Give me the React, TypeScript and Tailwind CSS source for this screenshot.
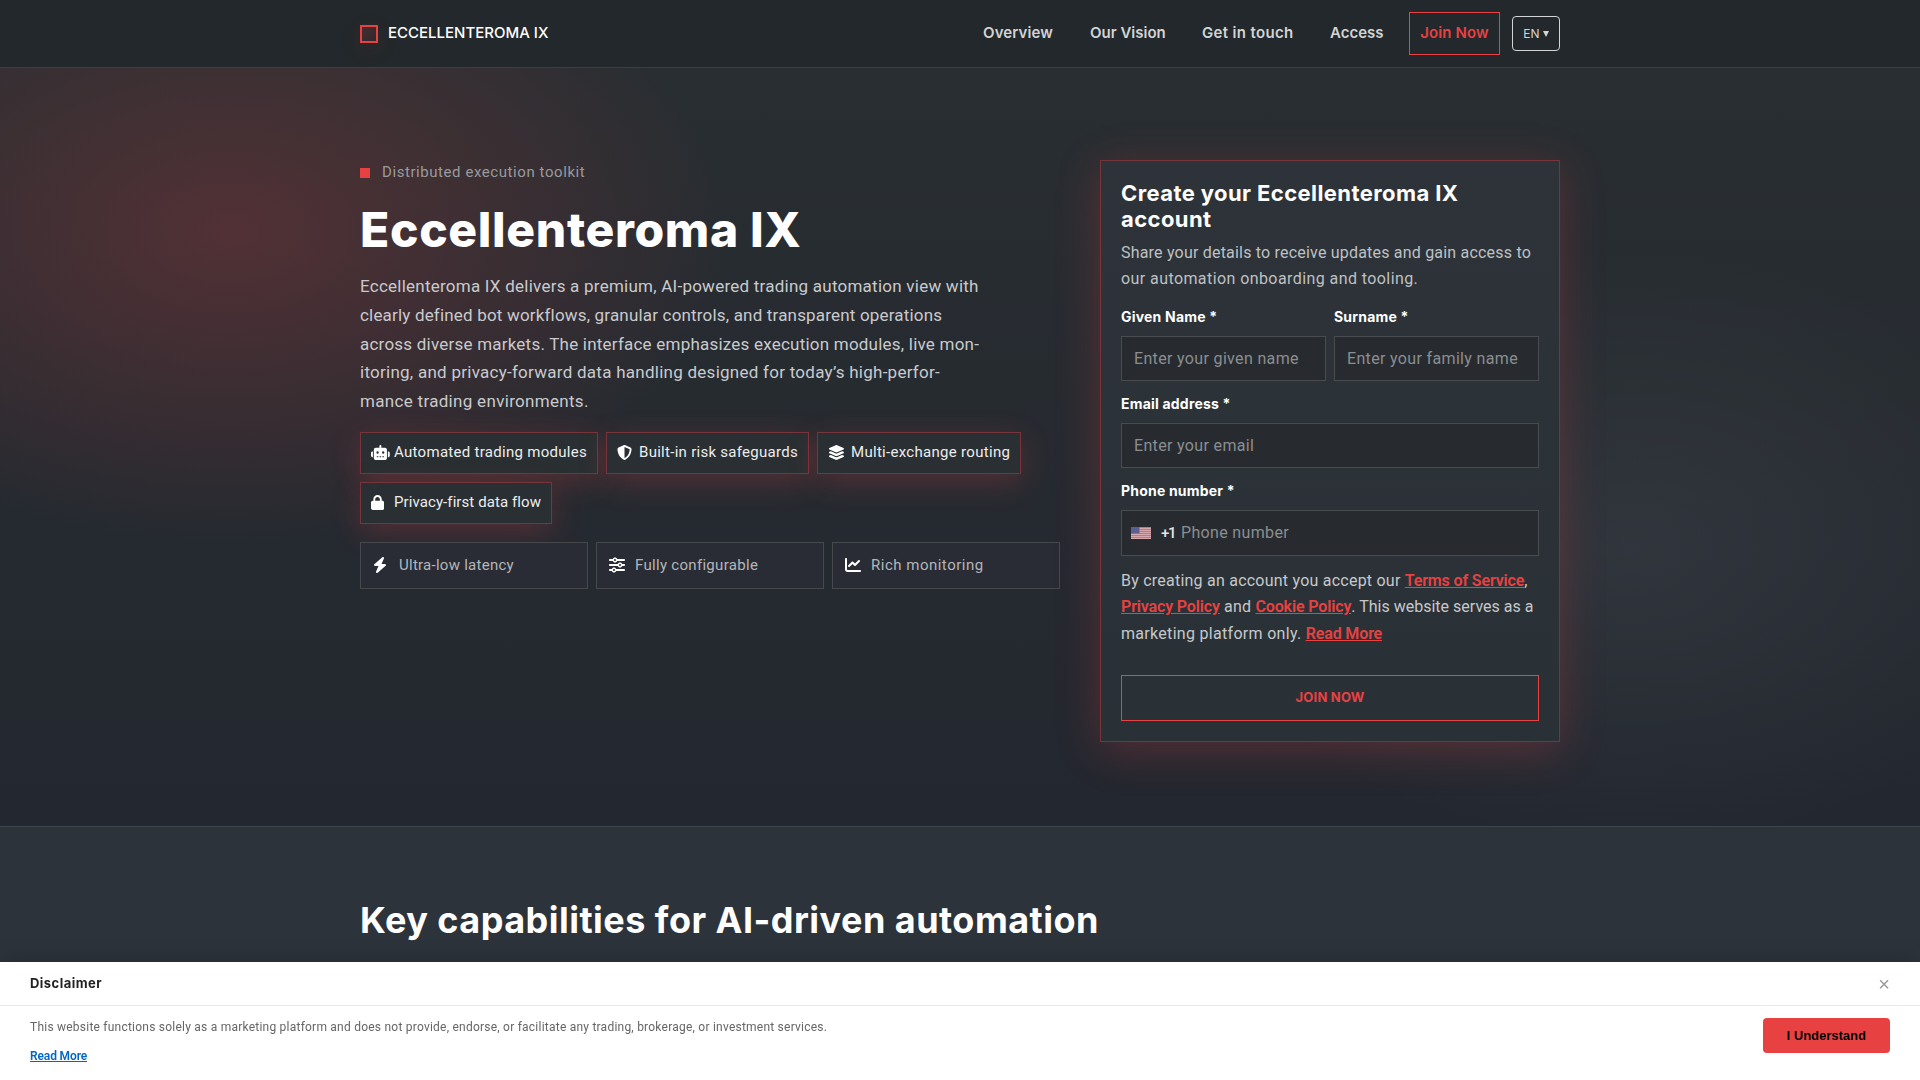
import type { ReactNode } from 'react'
import { FaBolt, FaChartLine, FaLayerGroup, FaLock, FaRobot, FaShieldHalved, FaSliders } from 'react-icons/fa6'

const chips = [
  { icon: FaRobot, iconSize: 'w-[18.75px]', slot: 'w-[23px]', label: 'Automated trading modules', size: 'w-[238px] tracking-[0.29px]' },
  { icon: FaShieldHalved, iconSize: 'w-[15px]', slot: 'w-[22px]', label: 'Built-in risk safeguards', size: 'w-[203px] tracking-[0.28px]' },
  { icon: FaLayerGroup, iconSize: 'w-[16.9px]', slot: 'w-[23px]', label: 'Multi-exchange routing', size: 'w-[204px] tracking-[0.3px]' },
  { icon: FaLock, iconSize: 'w-[13.1px]', slot: 'w-[23px]', label: 'Privacy-first data flow', size: 'w-[192px] tracking-[0.09px]' },
]

const perks = [
  { icon: FaBolt, iconSize: 'w-[14px]', label: 'Ultra-low latency', spacing: 'tracking-[0.26px]' },
  { icon: FaSliders, iconSize: 'w-4', label: 'Fully configurable', spacing: 'tracking-[0.3px]' },
  { icon: FaChartLine, iconSize: 'w-4', label: 'Rich monitoring', spacing: 'tracking-[0.5px]' },
]

const heroLines = [
  { text: 'Eccellenteroma IX delivers a premium, AI-powered trading automation view with', spacing: 'tracking-[0.24px]' },
  { text: 'clearly defined bot workflows, granular controls, and transparent operations', spacing: 'tracking-[0.18px]' },
  { text: 'across diverse markets. The interface emphasizes execution modules, live mon-', spacing: 'tracking-[0.22px]' },
  { text: 'itoring, and privacy-forward data handling designed for today’s high-perfor-', spacing: 'tracking-[0.26px]' },
  { text: 'mance trading environments.', spacing: 'tracking-[0.31px]' },
]

function Header() {
  return (
    <header className="h-[68px] bg-[#22282b] border-b border-[#3a3f42]">
      <div className="w-[1200px] h-[67px] mx-auto flex items-center justify-between font-['Inter',sans-serif]">
        <a href="#" className="flex items-center gap-[10px] text-white">
          <span className="w-[18px] h-[18px] border-2 border-[#e84142] bg-[linear-gradient(135deg,#4a2c30,#2b2a2d)] shadow-[0_6px_22px_rgba(232,65,66,0.12)]" />
          <span className="text-[15px] font-medium">ECCELLENTEROMA IX</span>
        </a>
        <nav className="flex items-center text-[15px] font-semibold text-[#d3d4d5]">
          <a href="#" className="w-[107px] tracking-[0.1px]">Overview</a>
          <a href="#" className="w-[112px]">Our Vision</a>
          <a href="#" className="w-[128px] tracking-[0.35px]">Get in touch</a>
          <a href="#" className="w-[79px]">Access</a>
          <a href="#" className="w-[91px] h-[43px] flex items-center justify-center border border-[#e84142] text-[#e84142] tracking-[0.1px]">Join Now</a>
          <button className="ml-3 w-[48px] h-[35px] flex items-center justify-center gap-[3px] border border-[#d3d4d5] rounded text-[12px] font-normal">
            EN
            <svg width="6" height="6" viewBox="0 0 6 6" fill="currentColor"><path d="M0 0h6L3 6z" /></svg>
          </button>
        </nav>
      </div>
    </header>
  )
}

function FieldLabel({ children }: { children: ReactNode }) {
  return (
    <span className="block h-[28px] leading-[18px] text-[14px] font-bold tracking-[0.2px] font-['Inter',sans-serif] text-white">
      {children}
    </span>
  )
}

function Field({ label, placeholder }: { label: string; placeholder: string }) {
  return (
    <label className="block flex-1">
      <FieldLabel>{label}</FieldLabel>
      <input
        placeholder={placeholder}
        className="block w-full h-[45px] px-3 border border-[#484c4f] bg-[#272b2f] text-base tracking-[0.34px] placeholder:text-[#8b8e91]"
      />
    </label>
  )
}

function Flag() {
  return (
    <svg width="20" height="12" viewBox="0 0 20 12" className="opacity-90">
      <rect width="20" height="12" fill="#f0d0d4" />
      {[0, 2, 4, 6, 8, 10].map(y => <rect key={y} y={y} width="20" height="1.3" fill="#e07a84" />)}
      <rect width="8.5" height="6.4" fill="#61649c" />
    </svg>
  )
}

function PolicyLink({ children }: { children: ReactNode }) {
  return <a href="#" className="text-[#e84142] font-semibold underline underline-offset-1 tracking-[-0.14px]">{children}</a>
}

function SignupCard() {
  return (
    <form className="w-[460px] h-[582px] px-5 pt-[19px] border border-[#77343a] bg-[linear-gradient(180deg,#2d3338,#2a3136)] shadow-[0_8px_40px_rgba(232,65,66,0.26)]">
      <h2 className="text-[22px] leading-[26px] font-bold tracking-[0.41px] font-['Inter',sans-serif] text-white">
        Create your Eccellenteroma IX<br />account
      </h2>
      <p className="mt-[8px] leading-[26.4px] tracking-[0.2px] text-[#bec1c4]">
        Share your details to receive updates and gain access to<br />
        <span className="tracking-[0.42px]">our automation onboarding and tooling.</span>
      </p>
      <div className="flex gap-2 mt-[15px]">
        <Field label="Given Name *" placeholder="Enter your given name" />
        <Field label="Surname *" placeholder="Enter your family name" />
      </div>
      <div className="flex mt-[14px]">
        <Field label="Email address *" placeholder="Enter your email" />
      </div>
      <div className="mt-[14px]">
        <FieldLabel>Phone number *</FieldLabel>
        <div className="h-[46px] flex items-center border border-[#484c4f] bg-[#272b2f] pl-[9px]">
          <Flag />
          <span className="ml-[10px] w-[20px] text-[15px] font-medium tracking-[-1.4px] text-[#e3e4e5]">+1</span>
          <input placeholder="Phone number" className="flex-1 tracking-[0.34px] placeholder:text-[#8b8e91]" />
        </div>
      </div>
      <p className="mt-[12px] leading-[26.4px] tracking-[0.23px] text-[#c6c8ca] whitespace-nowrap">
        By creating an account you accept our <PolicyLink>Terms of Service</PolicyLink>,<br />
        <PolicyLink>Privacy Policy</PolicyLink> and <PolicyLink>Cookie Policy</PolicyLink>
        <span className="tracking-[0.01px]">. This website serves as a</span><br />
        <span className="tracking-[0.3px]">marketing platform only. </span><PolicyLink>Read More</PolicyLink>
      </p>
      <button className="mt-[28px] w-full h-[46px] border border-[#e84142] text-[#e84142] text-[13px] font-bold tracking-[0.2px] font-['Inter',sans-serif]">
        JOIN NOW
      </button>
    </form>
  )
}

function Hero() {
  return (
    <section className="h-[759px] border-b border-[#41464a] bg-[radial-gradient(500px_310px_at_230px_164px,rgba(232,65,66,0.22),transparent),radial-gradient(440px_300px_at_1632px_480px,rgba(140,148,160,0.11),transparent),linear-gradient(180deg,#292e32,#23272f)]">
      <div className="w-[1200px] mx-auto pt-[92px] flex justify-between">
        <div className="w-[700px]">
          <div className="mt-[2px] h-[22px] flex items-center gap-3 text-[15px] tracking-[0.57px] text-[#989b9e]">
            <span className="w-[10px] h-[10px] bg-[#e84142]" />
            <span className="pb-[2px]">Distributed execution toolkit</span>
          </div>
          <h1 className="mt-[16px] h-[60px] leading-[60px] text-[48px] font-extrabold tracking-[0.65px] font-['Inter',sans-serif] text-white">
            Eccellenteroma IX
          </h1>
          <p className="mt-[12px] text-[17px] leading-[28.8px] text-[#c9cacd] whitespace-nowrap">
            {heroLines.map(({ text, spacing }) => <span key={text} className={`block ${spacing}`}>{text}</span>)}
          </p>
          <ul className="mt-[16px] flex flex-wrap gap-2">
            {chips.map(({ icon: Icon, iconSize, slot, label, size }) => (
              <li key={label} className={`${size} h-[42px] pl-[10px] flex items-center border border-[#77343a] bg-[#292f32] text-[15px] text-[#ededee] whitespace-nowrap shadow-[0_8px_30px_rgba(232,65,66,0.24)]`}>
                <span className={`${slot} shrink-0`}><Icon className={`${iconSize} h-[15px] max-w-none text-white`} /></span>
                <span className="pb-px">{label}</span>
              </li>
            ))}
          </ul>
          <ul className="mt-[18px] grid grid-cols-3 gap-2">
            {perks.map(({ icon: Icon, iconSize, label, spacing }) => (
              <li key={label} className={`${spacing} h-[47px] pl-3 flex items-center border border-[#45494c] bg-[#292c34] text-[15px] text-[#b4b6ba]`}>
                <span className="w-[26px] shrink-0"><Icon className={`${iconSize} h-4 text-white`} /></span>
                {label}
              </li>
            ))}
          </ul>
        </div>
        <SignupCard />
      </div>
    </section>
  )
}

function Disclaimer() {
  return (
    <aside className="fixed inset-x-0 bottom-0 h-[118px] bg-white shadow-[0_-4px_20px_rgba(0,0,0,0.15)]">
      <div className="h-[44px] px-[30px] flex items-center justify-between border-b border-[#e9e9e9]">
        <h3 className="text-[13px] font-bold tracking-[0.47px] font-['Inter',sans-serif] text-[#222]">Disclaimer</h3>
        <button className="text-[20px] leading-none text-[#999] font-['Liberation_Sans',sans-serif]">×</button>
      </div>
      <div className="px-[30px] pt-[12px] flex justify-between items-start">
        <div className="-mt-px">
          <p className="text-[12px] leading-[20px] tracking-[0.23px] text-[#666]">
            This website functions solely as a marketing platform and does not provide, endorse, or facilitate any trading, brokerage, or investment services.
          </p>
          <a href="#" className="block mt-[9px] text-[12px] leading-[20px] font-semibold tracking-[-0.13px] text-[#0066cc] underline">Read More</a>
        </div>
        <button className="w-[127px] h-[35px] rounded bg-[#e84142] text-[13px] font-bold text-black font-['Liberation_Sans',sans-serif]">
          I Understand
        </button>
      </div>
    </aside>
  )
}

export default function App() {
  return (
    <div className="h-[1080px] overflow-hidden bg-[#2c333a] font-['Roboto',sans-serif]">
      <Header />
      <Hero />
      <section className="w-[1200px] mx-auto pt-[69px]">
        <h2 className="text-[36px] leading-[48px] font-bold tracking-[0.47px] font-['Inter',sans-serif] text-white">
          Key capabilities for AI-driven automation
        </h2>
      </section>
      <Disclaimer />
    </div>
  )
}
